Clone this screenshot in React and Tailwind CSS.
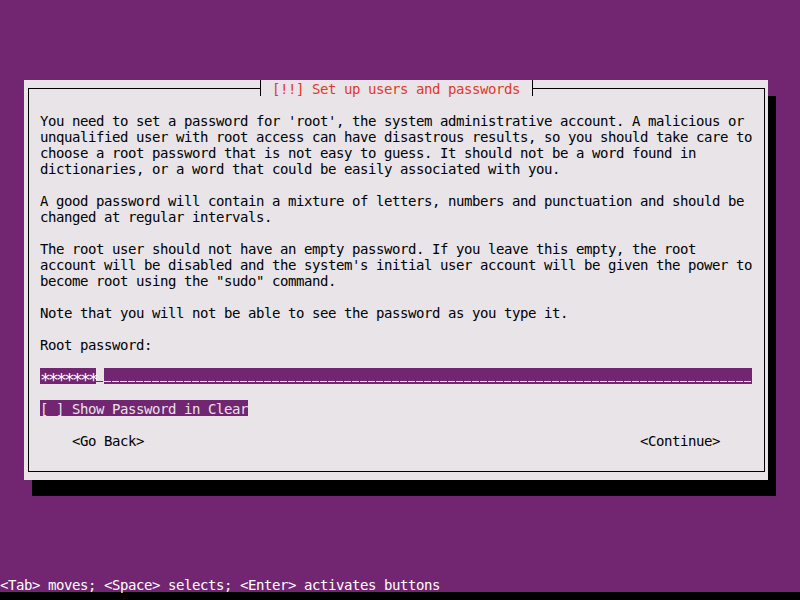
const PURPLE = 'bg-[#722570]';

// one text-mode row: 16px tall, glyph baseline pushed down a little
const Row = ({ children, className = '' }) => (
  <div className={`h-[16px] leading-[18px] whitespace-pre ${className}`}>{children}</div>
);

const bodyRows = [
  '',
  "You need to set a password for 'root', the system administrative account. A malicious or",
  'unqualified user with root access can have disastrous results, so you should take care to',
  'choose a root password that is not easy to guess. It should not be a word found in',
  'dictionaries, or a word that could be easily associated with you.',
  '',
  'A good password will contain a mixture of letters, numbers and punctuation and should be',
  'changed at regular intervals.',
  '',
  'The root user should not have an empty password. If you leave this empty, the root',
  "account will be disabled and the system's initial user account will be given the power to",
  'become root using the "sudo" command.',
  '',
  'Note that you will not be able to see the password as you type it.',
  '',
  'Root password:',
  '',
];

const Dialog = () => (
  <div className="w-[744px] h-[400px] bg-[#e8e4e8] shadow-[8px_16px_0_0_#000] flex flex-col text-black">
    {/* top edge with the title sitting on it */}
    <div className="h-[16px] pl-[4px] flex">
      <div className="w-[232px] h-[16px]">
        <div className="mt-[8px] h-[8px] border-t border-l border-black" />
      </div>
      <div className="w-px h-[16px] bg-black" />
      <Row className="w-[271px] pl-[11px] text-[#e0392b]">[!!] Set up users and passwords</Row>
      <div className="w-px h-[16px] bg-black" />
      <div className="w-[232px] h-[16px]">
        <div className="mt-[8px] h-[8px] border-t border-r border-black" />
      </div>
    </div>

    <div className="ml-[4px] w-[737px] h-[376px] border-l border-r border-b border-black pl-[11px]">
      {bodyRows.map((line, i) => (
        <Row key={i}>{line}</Row>
      ))}

      {/* password entry: masked text, cursor cell, then the empty underscored field */}
      <div className="flex w-[712px] h-[16px]">
        <div className={`w-[56px] h-[16px] ${PURPLE} text-white text-[18px] leading-[24px] tracking-[-2.837px] whitespace-pre`}>
          *******
        </div>
        <div className="w-[8px] h-[16px] pt-[13px]">
          <div className="w-[7px] h-px bg-[#722570]" />
        </div>
        <div className={`w-[648px] h-[16px] pt-[13px] ${PURPLE}`}>
          <div className="h-px bg-[repeating-linear-gradient(90deg,#e8e4e8_0_7px,#722570_7px_8px)]" />
        </div>
      </div>
      <Row />

      <Row className={`w-[208px] ${PURPLE} text-[#e8e4e8]`}>[ ] Show Password in Clear</Row>
      <Row />

      <div className="w-[712px] px-[32px] flex justify-between">
        <Row>{'<Go Back>'}</Row>
        <Row>{'<Continue>'}</Row>
      </div>
    </div>
  </div>
);

export default function App() {
  return (
    <div className="w-[800px] h-[600px] bg-black overflow-hidden font-['DejaVu_Sans_Mono',monospace] text-[14px] tracking-[-0.4287px]">
      <div className={`h-[592px] ${PURPLE} flex flex-col`}>
        <div className="pt-[80px] pl-[24px]">
          <Dialog />
        </div>
        <Row className="mt-auto text-white">{'<Tab> moves; <Space> selects; <Enter> activates buttons'}</Row>
      </div>
    </div>
  );
}
